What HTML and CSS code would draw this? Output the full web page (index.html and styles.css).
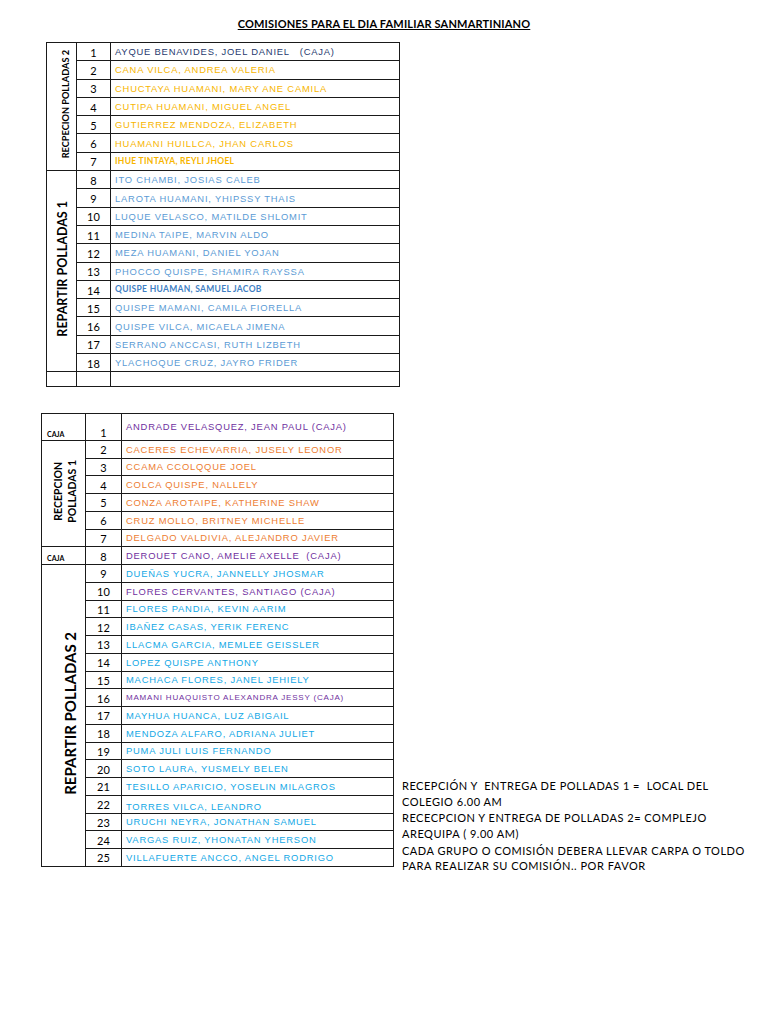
FILE: index.html
```html
<!DOCTYPE html>
<html lang="es">
<head>
<meta charset="utf-8">
<title>Comisiones para el Dia Familiar Sanmartiniano</title>
<link rel="stylesheet" href="styles.css">
</head>
<body>
<div class="page">
  <h1 class="title">COMISIONES PARA EL DIA FAMILIAR SANMARTINIANO</h1>

  <table class="sheet sheet-1">
    <colgroup><col class="c1-group"><col class="c1-num"><col class="c1-name"></colgroup>
    <tr><td rowspan="7" class="grp"><div class="vert v-rec2">RECPECION POLLADAS 2</div></td><td class="num">1</td><td class="name navy">AYQUE BENAVIDES, JOEL DANIEL &nbsp; (CAJA)</td></tr>
    <tr><td class="num">2</td><td class="name gold">CANA VILCA, ANDREA VALERIA</td></tr>
    <tr><td class="num">3</td><td class="name gold">CHUCTAYA HUAMANI, MARY ANE CAMILA</td></tr>
    <tr><td class="num">4</td><td class="name gold">CUTIPA HUAMANI, MIGUEL ANGEL</td></tr>
    <tr><td class="num">5</td><td class="name gold">GUTIERREZ MENDOZA, ELIZABETH</td></tr>
    <tr><td class="num">6</td><td class="name gold">HUAMANI HUILLCA, JHAN CARLOS</td></tr>
    <tr><td class="num">7</td><td class="name gold alt">IHUE TINTAYA, REYLI JHOEL</td></tr>
    <tr><td rowspan="11" class="grp"><div class="vert v-rep1">REPARTIR POLLADAS 1</div></td><td class="num">8</td><td class="name sky">ITO CHAMBI, JOSIAS CALEB</td></tr>
    <tr><td class="num">9</td><td class="name sky">LAROTA HUAMANI, YHIPSSY THAIS</td></tr>
    <tr><td class="num">10</td><td class="name sky">LUQUE VELASCO, MATILDE SHLOMIT</td></tr>
    <tr><td class="num">11</td><td class="name sky">MEDINA TAIPE, MARVIN ALDO</td></tr>
    <tr><td class="num">12</td><td class="name sky">MEZA HUAMANI, DANIEL YOJAN</td></tr>
    <tr><td class="num">13</td><td class="name sky">PHOCCO QUISPE, SHAMIRA RAYSSA</td></tr>
    <tr><td class="num">14</td><td class="name sky-dark alt">QUISPE HUAMAN, SAMUEL JACOB</td></tr>
    <tr><td class="num">15</td><td class="name sky">QUISPE MAMANI, CAMILA FIORELLA</td></tr>
    <tr><td class="num">16</td><td class="name sky">QUISPE VILCA, MICAELA JIMENA</td></tr>
    <tr><td class="num">17</td><td class="name sky">SERRANO ANCCASI, RUTH LIZBETH</td></tr>
    <tr><td class="num">18</td><td class="name sky">YLACHOQUE CRUZ, JAYRO FRIDER</td></tr>
    <tr class="blank"><td></td><td></td><td></td></tr>
  </table>

  <div class="second">
    <table class="sheet sheet-2">
      <colgroup><col class="c2-group"><col class="c2-num"><col class="c2-name"></colgroup>
      <tr class="tall"><td class="caja">CAJA</td><td class="num low">1</td><td class="name purple">ANDRADE VELASQUEZ, JEAN PAUL (CAJA)</td></tr>
      <tr><td rowspan="6" class="grp"><div class="vert v-rec1">RECEPCION<br>POLLADAS 1</div></td><td class="num">2</td><td class="name orange">CACERES ECHEVARRIA, JUSELY LEONOR</td></tr>
      <tr><td class="num">3</td><td class="name orange">CCAMA CCOLQQUE JOEL</td></tr>
      <tr><td class="num">4</td><td class="name orange">COLCA QUISPE, NALLELY</td></tr>
      <tr><td class="num">5</td><td class="name orange">CONZA AROTAIPE, KATHERINE SHAW</td></tr>
      <tr><td class="num">6</td><td class="name orange">CRUZ MOLLO, BRITNEY MICHELLE</td></tr>
      <tr><td class="num">7</td><td class="name orange">DELGADO VALDIVIA, ALEJANDRO JAVIER</td></tr>
      <tr><td class="caja">CAJA</td><td class="num">8</td><td class="name purple">DEROUET CANO, AMELIE AXELLE &nbsp;(CAJA)</td></tr>
      <tr><td rowspan="17" class="grp"><div class="vert v-rep2">REPARTIR POLLADAS 2</div></td><td class="num">9</td><td class="name cyan">DUEÑAS YUCRA, JANNELLY JHOSMAR</td></tr>
      <tr><td class="num">10</td><td class="name purple">FLORES CERVANTES, SANTIAGO (CAJA)</td></tr>
      <tr><td class="num">11</td><td class="name cyan">FLORES PANDIA, KEVIN AARIM</td></tr>
      <tr><td class="num">12</td><td class="name cyan">IBAÑEZ CASAS, YERIK FERENC</td></tr>
      <tr><td class="num">13</td><td class="name cyan">LLACMA GARCIA, MEMLEE GEISSLER</td></tr>
      <tr><td class="num">14</td><td class="name cyan">LOPEZ QUISPE ANTHONY</td></tr>
      <tr><td class="num">15</td><td class="name cyan">MACHACA FLORES, JANEL JEHIELY</td></tr>
      <tr><td class="num">16</td><td class="name purple narrow">MAMANI HUAQUISTO ALEXANDRA JESSY (CAJA)</td></tr>
      <tr><td class="num">17</td><td class="name cyan">MAYHUA HUANCA, LUZ ABIGAIL</td></tr>
      <tr><td class="num">18</td><td class="name cyan">MENDOZA ALFARO, ADRIANA JULIET</td></tr>
      <tr><td class="num">19</td><td class="name cyan">PUMA JULI LUIS FERNANDO</td></tr>
      <tr><td class="num">20</td><td class="name cyan">SOTO LAURA, YUSMELY BELEN</td></tr>
      <tr><td class="num">21</td><td class="name cyan">TESILLO APARICIO, YOSELIN MILAGROS</td></tr>
      <tr><td class="num">22</td><td class="name cyan low">TORRES VILCA, LEANDRO</td></tr>
      <tr><td class="num">23</td><td class="name cyan">URUCHI NEYRA, JONATHAN SAMUEL</td></tr>
      <tr><td class="num">24</td><td class="name cyan">VARGAS RUIZ, YHONATAN YHERSON</td></tr>
      <tr><td class="num">25</td><td class="name cyan">VILLAFUERTE ANCCO, ANGEL RODRIGO</td></tr>
    </table>

    <div class="notes">
      <p>RECEPCIÓN Y &nbsp;ENTREGA DE POLLADAS 1 = &nbsp;LOCAL DEL<br>COLEGIO 6.00 AM</p>
      <p>RECECPCION Y ENTREGA DE POLLADAS 2= COMPLEJO<br>AREQUIPA ( 9.00 AM)</p>
      <p>CADA GRUPO O COMISIÓN DEBERA LLEVAR CARPA O TOLDO<br>PARA REALIZAR SU COMISIÓN.. POR FAVOR</p>
    </div>
  </div>
</div>
</body>
</html>
```

FILE: styles.css
```css
html, body {
  margin: 0;
  padding: 0;
  background: #ffffff;
}

.page {
  width: 768px;
  min-height: 1024px;
  padding-top: 17px;
  box-sizing: border-box;
  font-family: "Liberation Sans", Arial, sans-serif;
  color: #000;
}

.title {
  margin: 0;
  height: 25px;
  text-align: center;
  font-family: Lato, "Liberation Sans", sans-serif;
  font-weight: 700;
  font-size: 11px;
  line-height: 14px;
  text-decoration: underline;
  text-underline-offset: 1px;
  letter-spacing: 0.17px;
}

.sheet {
  border-collapse: collapse;
  table-layout: fixed;
}

.sheet td {
  border: 1px solid #1a1a1a;
  padding: 0;
  overflow: hidden;
  white-space: nowrap;
}

.sheet-1 {
  margin-left: 46px;
  width: 353px;
}
.c1-group { width: 30px; }
.c1-num { width: 34px; }
.c1-name { width: 289px; }
.sheet-1 tr { height: 18.3px; }
.sheet-1 tr.blank { height: 14.5px; }

.second {
  display: flex;
  align-items: flex-start;
  margin-top: 26px;
  margin-left: 41px;
}

.sheet-2 {
  width: 352px;
  flex: none;
}
.c2-group { width: 44px; }
.c2-num { width: 36px; }
.c2-name { width: 272px; }
.sheet-2 tr { height: 17.75px; }
.sheet-2 tr.tall { height: 27px; }

.num {
  text-align: center;
  font-family: Lato, "Liberation Sans", sans-serif;
  font-size: 11px;
  line-height: 12px;
  padding-top: 2px !important;
  vertical-align: middle;
}
.num.low { vertical-align: bottom; padding-bottom: 1px !important; }

.name {
  font-size: 9.4px;
  letter-spacing: 0.8px;
  line-height: 11px;
  padding-left: 4px !important;
  vertical-align: middle;
}
.name.low { vertical-align: bottom; padding-bottom: 1px !important; }

.name.alt {
  font-family: Lato, "Liberation Sans", sans-serif;
  font-weight: 700;
  font-size: 8.5px;
  letter-spacing: 0.3px;
}
.name.narrow {
  font-size: 8px;
  letter-spacing: 0.8px;
}

.navy { color: #1f3a6e; }
.gold { color: #f7b500; }
.sky { color: #5b9bd5; }
.sky-dark { color: #3f7fc4; }
.purple { color: #7030a0; }
.orange { color: #ed7d31; }
.cyan { color: #12a8e6; }

.grp {
  text-align: center;
  vertical-align: middle;
}

.vert {
  writing-mode: vertical-rl;
  transform: rotate(180deg);
  display: inline-block;
  font-family: Lato, "Liberation Sans", sans-serif;
  font-weight: 700;
  white-space: nowrap;
  text-align: center;
}
.v-rec2 { font-size: 9.2px; line-height: 11px; margin-left: 8px; }
.v-rep1 { font-size: 12.5px; line-height: 14px; margin-left: 3px; }
.v-rec1 { font-size: 10.5px; line-height: 14px; margin-left: 2px; }
.v-rep2 { font-size: 15px; line-height: 16px; margin-left: 12px; }

.caja {
  font-family: Lato, "Liberation Sans", sans-serif;
  font-weight: 700;
  font-size: 7px;
  line-height: 9px;
  vertical-align: bottom;
  padding-left: 5px !important;
  padding-bottom: 1px !important;
}

.notes {
  margin-top: 365px;
  margin-left: 8px;
  font-family: Lato, "Liberation Sans", sans-serif;
  font-size: 11px;
  line-height: 15.7px;
  letter-spacing: 0.52px;
}
.notes p {
  margin: 0 0 1px 0;
  white-space: nowrap;
}
```
